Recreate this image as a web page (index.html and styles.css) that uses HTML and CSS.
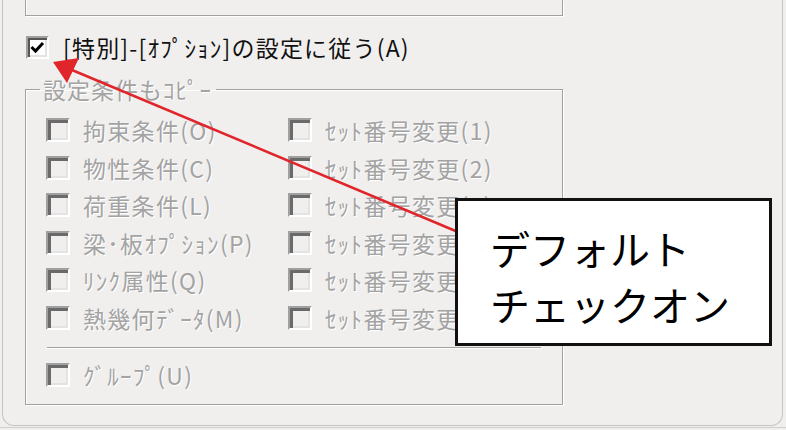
FILE: index.html
```html
<!DOCTYPE html>
<html lang="ja">

<head>
    <meta charset="UTF-8">
    <title>設定条件</title>
    <link rel="stylesheet" href="styles.css">
</head>

<body>
    <div class="panel">
        <!-- 上のグループの下端 -->
        <div class="top-group"></div>

        <div class="main-option">
            <span class="check checked">
                <svg viewBox="0 0 19 19" width="19" height="19"><path d="M3.5 9 L7.5 13 L15 5" fill="none" stroke="#000" stroke-width="3"/></svg>
            </span>
            <span class="main-label">[特別]-[ｵﾌﾟｼｮﾝ]の設定に従う(A)</span>
        </div>

        <fieldset class="copy-group">
            <legend>設定条件もｺﾋﾟｰ</legend>
            <div class="option-grid">
                <div class="option"><span class="check"></span><span class="label">拘束条件(O)</span></div>
                <div class="option"><span class="check"></span><span class="label">ｾｯﾄ番号変更(1)</span></div>
                <div class="option"><span class="check"></span><span class="label">物性条件(C)</span></div>
                <div class="option"><span class="check"></span><span class="label">ｾｯﾄ番号変更(2)</span></div>
                <div class="option"><span class="check"></span><span class="label">荷重条件(L)</span></div>
                <div class="option"><span class="check"></span><span class="label">ｾｯﾄ番号変更(3)</span></div>
                <div class="option"><span class="check"></span><span class="label">梁･板ｵﾌﾟｼｮﾝ(P)</span></div>
                <div class="option"><span class="check"></span><span class="label">ｾｯﾄ番号変更(4)</span></div>
                <div class="option"><span class="check"></span><span class="label">ﾘﾝｸ属性(Q)</span></div>
                <div class="option"><span class="check"></span><span class="label">ｾｯﾄ番号変更(5)</span></div>
                <div class="option"><span class="check"></span><span class="label">熱幾何ﾃﾞｰﾀ(M)</span></div>
                <div class="option"><span class="check"></span><span class="label">ｾｯﾄ番号変更(6)</span></div>
            </div>
            <div class="separator"></div>
            <div class="option"><span class="check"></span><span class="label">ｸﾞﾙｰﾌﾟ(U)</span></div>
        </fieldset>
    </div>
    <div class="next-strip"></div>

    <!-- 注釈 -->
    <svg class="arrow" width="786" height="430" viewBox="0 0 786 430">
        <line x1="72" y1="70" x2="458" y2="232" stroke="#e0252b" stroke-width="2.5"/>
        <polygon points="53,62 79,58 67,83" fill="#e0252b"/>
    </svg>
    <div class="callout">デフォルト<br>チェックオン</div>
</body>

</html>
```

FILE: styles.css
```css
body {
    margin: 0;
    background-color: #f0efee;
    font-family: "Noto Sans CJK JP", "Noto Sans", sans-serif;
    overflow: hidden;
    width: 786px;
    height: 430px;
}

.panel {
    margin-left: 2px;
    width: 781px;
    height: 426px;
    box-sizing: border-box;
    border: 1px solid #c4c4c4;
    border-top: none;
    border-radius: 0 0 12px 12px;
    padding-left: 22px;
}

/* 溝のような枠線 */
.top-group {
    width: 538px;
    height: 16px;
    box-sizing: border-box;
    border: 1px solid #a0a0a0;
    border-top: none;
    box-shadow: 1px 1px 0 #fff, inset 1px 0 0 #fff;
}

.main-option {
    display: flex;
    align-items: center;
    gap: 14px;
    margin-top: 20px;
    margin-left: 1px;
    height: 23px;
}

.main-label {
    font-size: 23px;
    line-height: 23px;
    color: #111;
    letter-spacing: 1.2px;
}

.check {
    width: 24px;
    height: 24px;
    box-sizing: border-box;
    flex: none;
    border: 2px solid;
    border-color: #a0a0a0 #fff #fff #a0a0a0;
    box-shadow: inset 3px 3px 0 #6a6a6a, inset -2px -2px 0 #e3e3e3;
    background-color: #f0efee;
}

.check.checked {
    width: 23px;
    height: 23px;
    background-color: #fff;
    box-shadow: inset 2px 2px 0 #555, inset -2px -2px 0 #e3e3e3;
    display: flex;
    align-items: center;
    justify-content: center;
}

.copy-group {
    margin: 18px 0 0;
    width: 538px;
    box-sizing: border-box;
    border: 1px solid #a0a0a0;
    box-shadow: 1px 1px 0 #fff, inset 1px 1px 0 #fff;
    padding: 17px 0 17px 20px;
}

.copy-group legend {
    margin-left: -6px;
    padding: 0 4px 0 3px;
    font-size: 23px;
    line-height: 24px;
    color: #a3a3a3;
    text-shadow: 1px 1px 0 #fff;
    letter-spacing: 1px;
}

.option-grid {
    display: grid;
    grid-template-columns: 242px auto;
    grid-auto-rows: 24px;
    row-gap: 13.5px;
}

.option {
    display: flex;
    align-items: center;
    gap: 13px;
    height: 24px;
}

.label {
    font-size: 23px;
    line-height: 24px;
    color: #a3a3a3;
    text-shadow: 1px 1px 0 #fff;
    white-space: nowrap;
    letter-spacing: 1.3px;
}

.separator {
    margin: 17px 0 15px 1px;
    width: 494px;
    height: 1px;
    background-color: #a0a0a0;
    box-shadow: 0 1px 0 #fff;
}

.next-strip {
    margin-top: 1px;
    height: 3px;
    border-top: 1px solid #cfcfcf;
}

.arrow {
    position: absolute;
    top: 0;
    left: 0;
    pointer-events: none;
}

.callout {
    position: absolute;
    left: 455px;
    top: 198px;
    width: 317px;
    height: 148px;
    box-sizing: border-box;
    border: 3px solid #111;
    background-color: #fff;
    padding: 19px 0 0 32px;
    font-size: 40px;
    line-height: 56px;
    color: #000;
}
```
